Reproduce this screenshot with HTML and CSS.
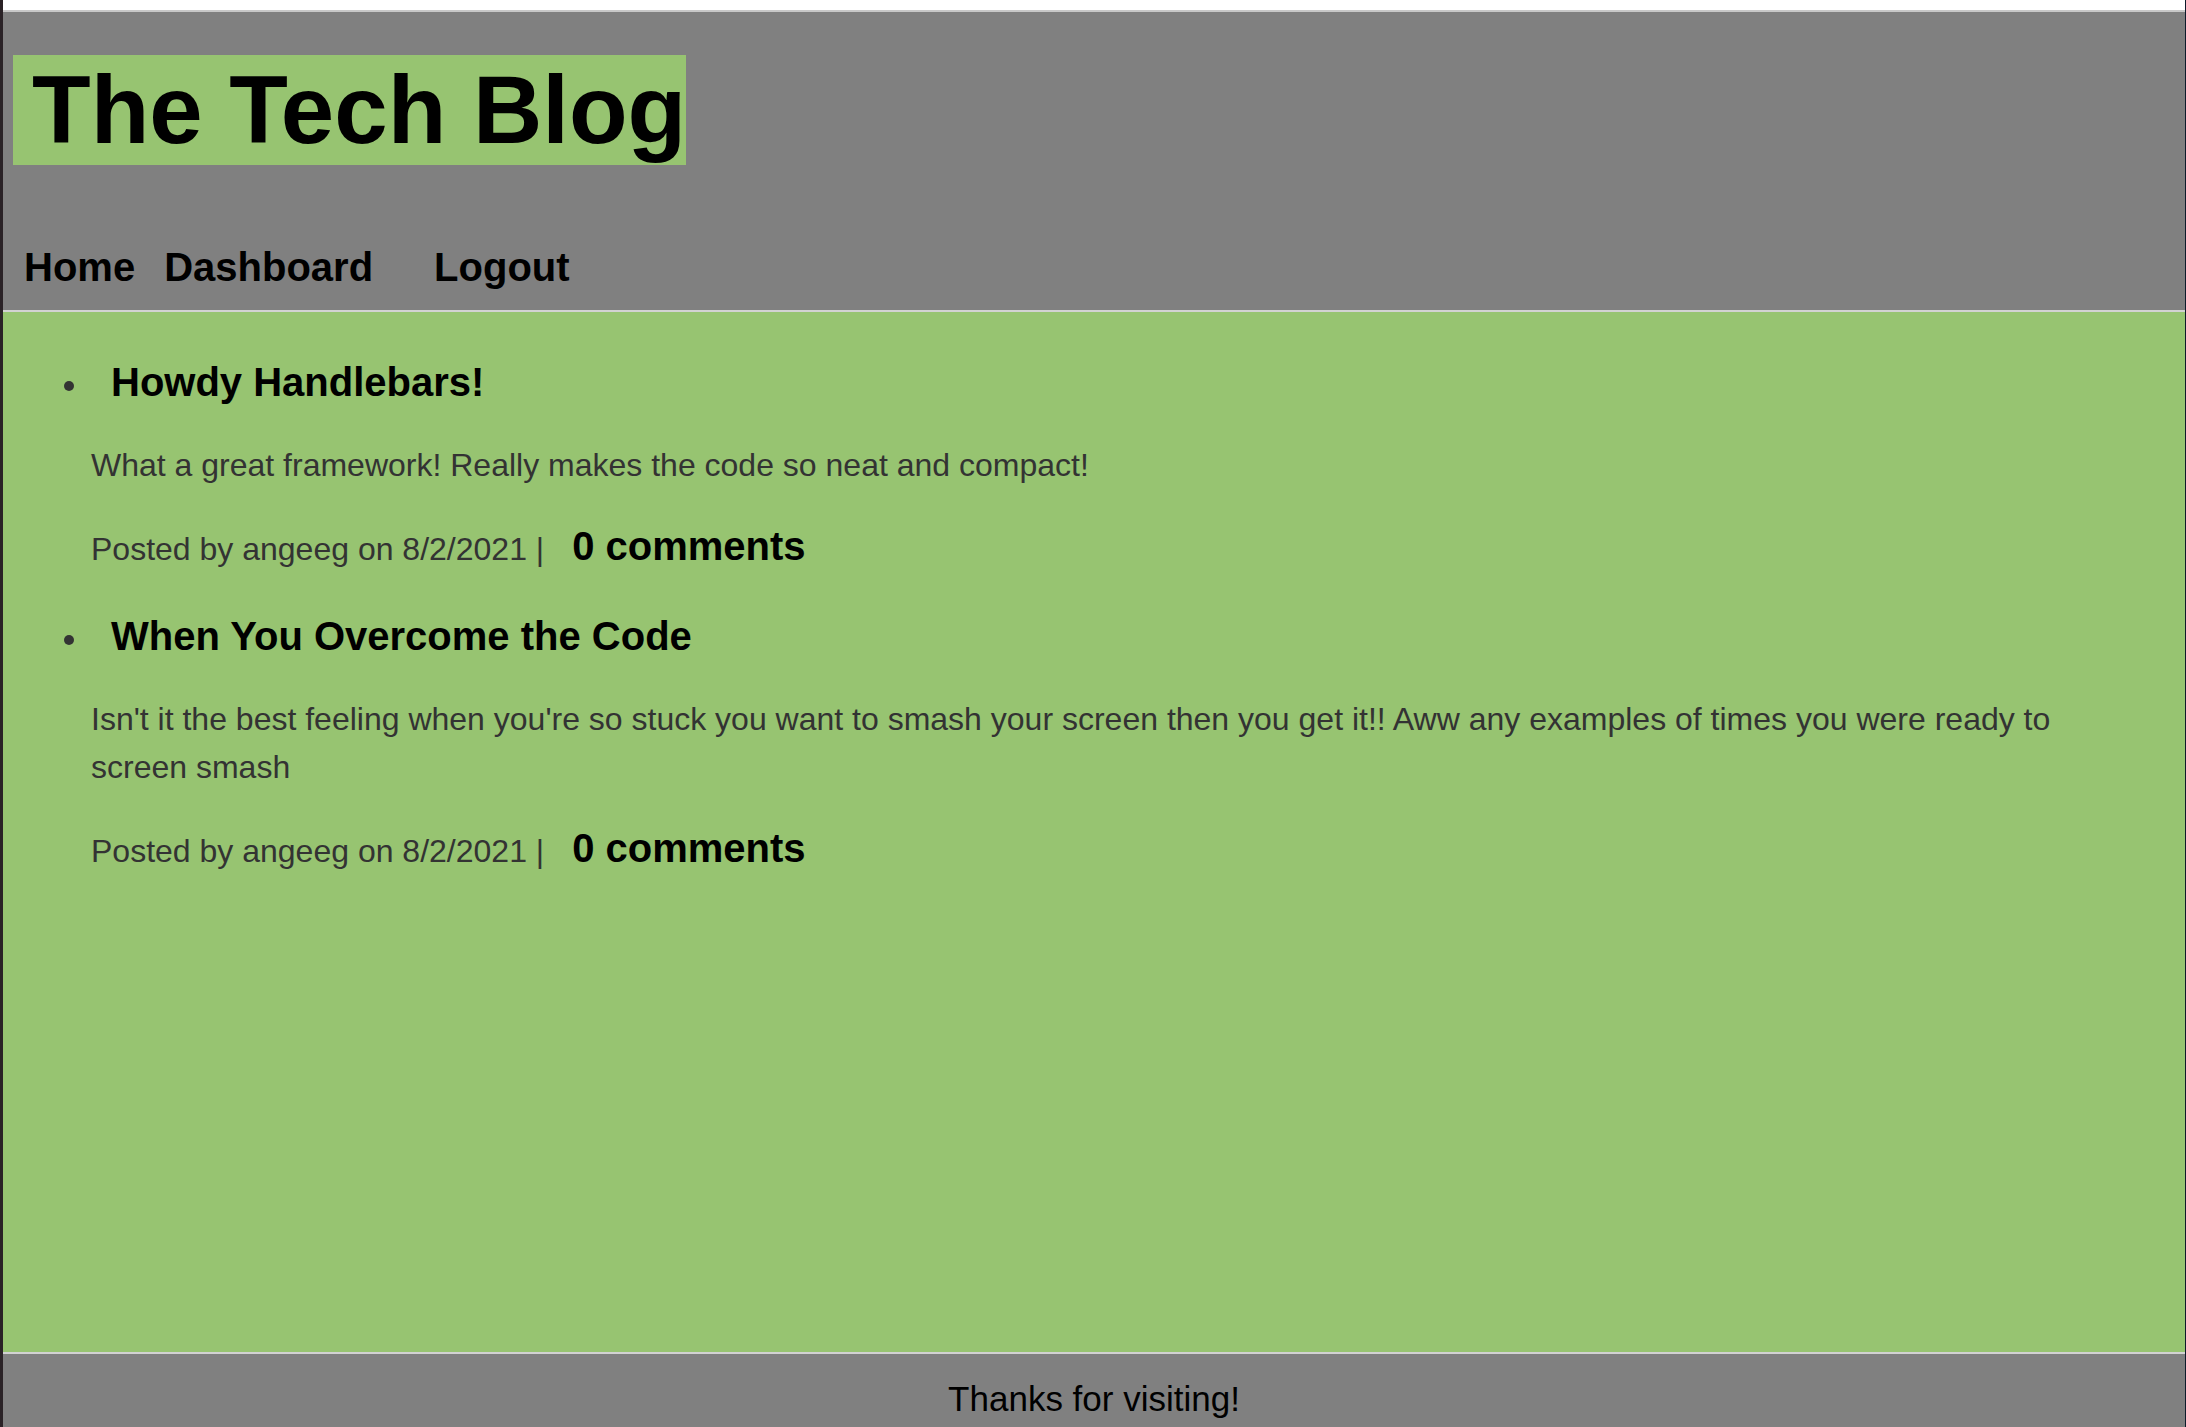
FILE: index.html
```html
<!DOCTYPE html>
<html lang="en">
<head>
<meta charset="utf-8">
<title>The Tech Blog</title>
<link rel="stylesheet" href="styles.css">
</head>
<body>
<div class="window">
  <div class="topbar"></div>
  <header class="header">
    <h1 class="site-title">The Tech Blog</h1>
    <nav class="nav">
      <a class="nav-link" href="#">Home</a>
      <a class="nav-link" href="#">Dashboard</a>
      <a class="nav-link nav-logout" href="#">Logout</a>
    </nav>
  </header>
  <main class="main">
    <ul class="posts">
      <li class="post">
        <h2 class="post-title">Howdy Handlebars!</h2>
        <p class="post-body">What a great framework! Really makes the code so neat and compact!</p>
        <p class="post-meta">Posted by angeeg on 8/2/2021 |<a class="comments" href="#">0 comments</a></p>
      </li>
      <li class="post">
        <h2 class="post-title">When You Overcome the Code</h2>
        <p class="post-body">Isn't it the best feeling when you're so stuck you want to smash your screen then you get it!! Aww any examples of times you were ready to screen smash</p>
        <p class="post-meta">Posted by angeeg on 8/2/2021 |<a class="comments" href="#">0 comments</a></p>
      </li>
    </ul>
  </main>
  <footer class="footer">Thanks for visiting!</footer>
</div>
</body>
</html>
```

FILE: styles.css
```css
html, body {
  margin: 0;
  padding: 0;
  height: 100%;
}

body {
  background: #221c22;
  font-family: "Liberation Sans", Arial, Helvetica, sans-serif;
  overflow: hidden;
}

.window {
  height: 1427px;
  display: flex;
  flex-direction: column;
  border-left: 3px solid #2a2226;
  border-right: 1px solid #0d1a2a;
  overflow: hidden;
}

.topbar {
  height: 10px;
  background: #ffffff;
  border-bottom: 2px solid #c8c8c8;
  flex: none;
}

.header {
  background: #808080;
  padding: 43px 0 20px 10px;
  border-bottom: 2px solid #d2d2d2;
  flex: none;
}

.site-title {
  display: inline-block;
  margin: 0;
  padding: 0 0 0 19px;
  background: #97c471;
  color: #000;
  font-size: 96px;
  line-height: 110px;
  font-weight: bold;
}

.nav {
  display: flex;
  margin-top: 80px;
  padding-left: 11px;
}

.nav-link {
  color: #000;
  text-decoration: none;
  font-size: 40px;
  line-height: 45px;
  font-weight: bold;
}

.nav-link + .nav-link {
  margin-left: 29px;
}

.nav-link.nav-logout {
  margin-left: 61px;
}

.main {
  flex: 1;
  background: #97c471;
  padding: 47px 88px 0 61px;
  color: #333;
}

.posts {
  list-style: none;
  margin: 0;
  padding: 0;
  display: flex;
  flex-direction: column;
  gap: 40px;
}

.post-title {
  display: flex;
  margin: 0 0 36px;
  color: #000;
  font-size: 40px;
  line-height: 46px;
  font-weight: bold;
}

.post-title::before {
  content: "";
  flex: none;
  width: 10px;
  height: 10px;
  margin-top: 22px;
  margin-right: 37px;
  border-radius: 50%;
  background: #333;
}

.post-body {
  margin: 0 0 33px;
  padding-left: 27px;
  font-size: 32px;
  line-height: 48px;
}

.post-meta {
  margin: 0;
  padding-left: 27px;
  font-size: 32px;
  line-height: 48px;
}

.comments {
  margin-left: 28px;
  color: #000;
  text-decoration: none;
  font-size: 40px;
  line-height: 48px;
  font-weight: bold;
}

.footer {
  flex: none;
  height: 48px;
  padding-top: 25px;
  background: #808080;
  border-top: 2px solid #d2d2d2;
  text-align: center;
  color: #000;
  font-size: 35px;
  line-height: 40px;
}
```
